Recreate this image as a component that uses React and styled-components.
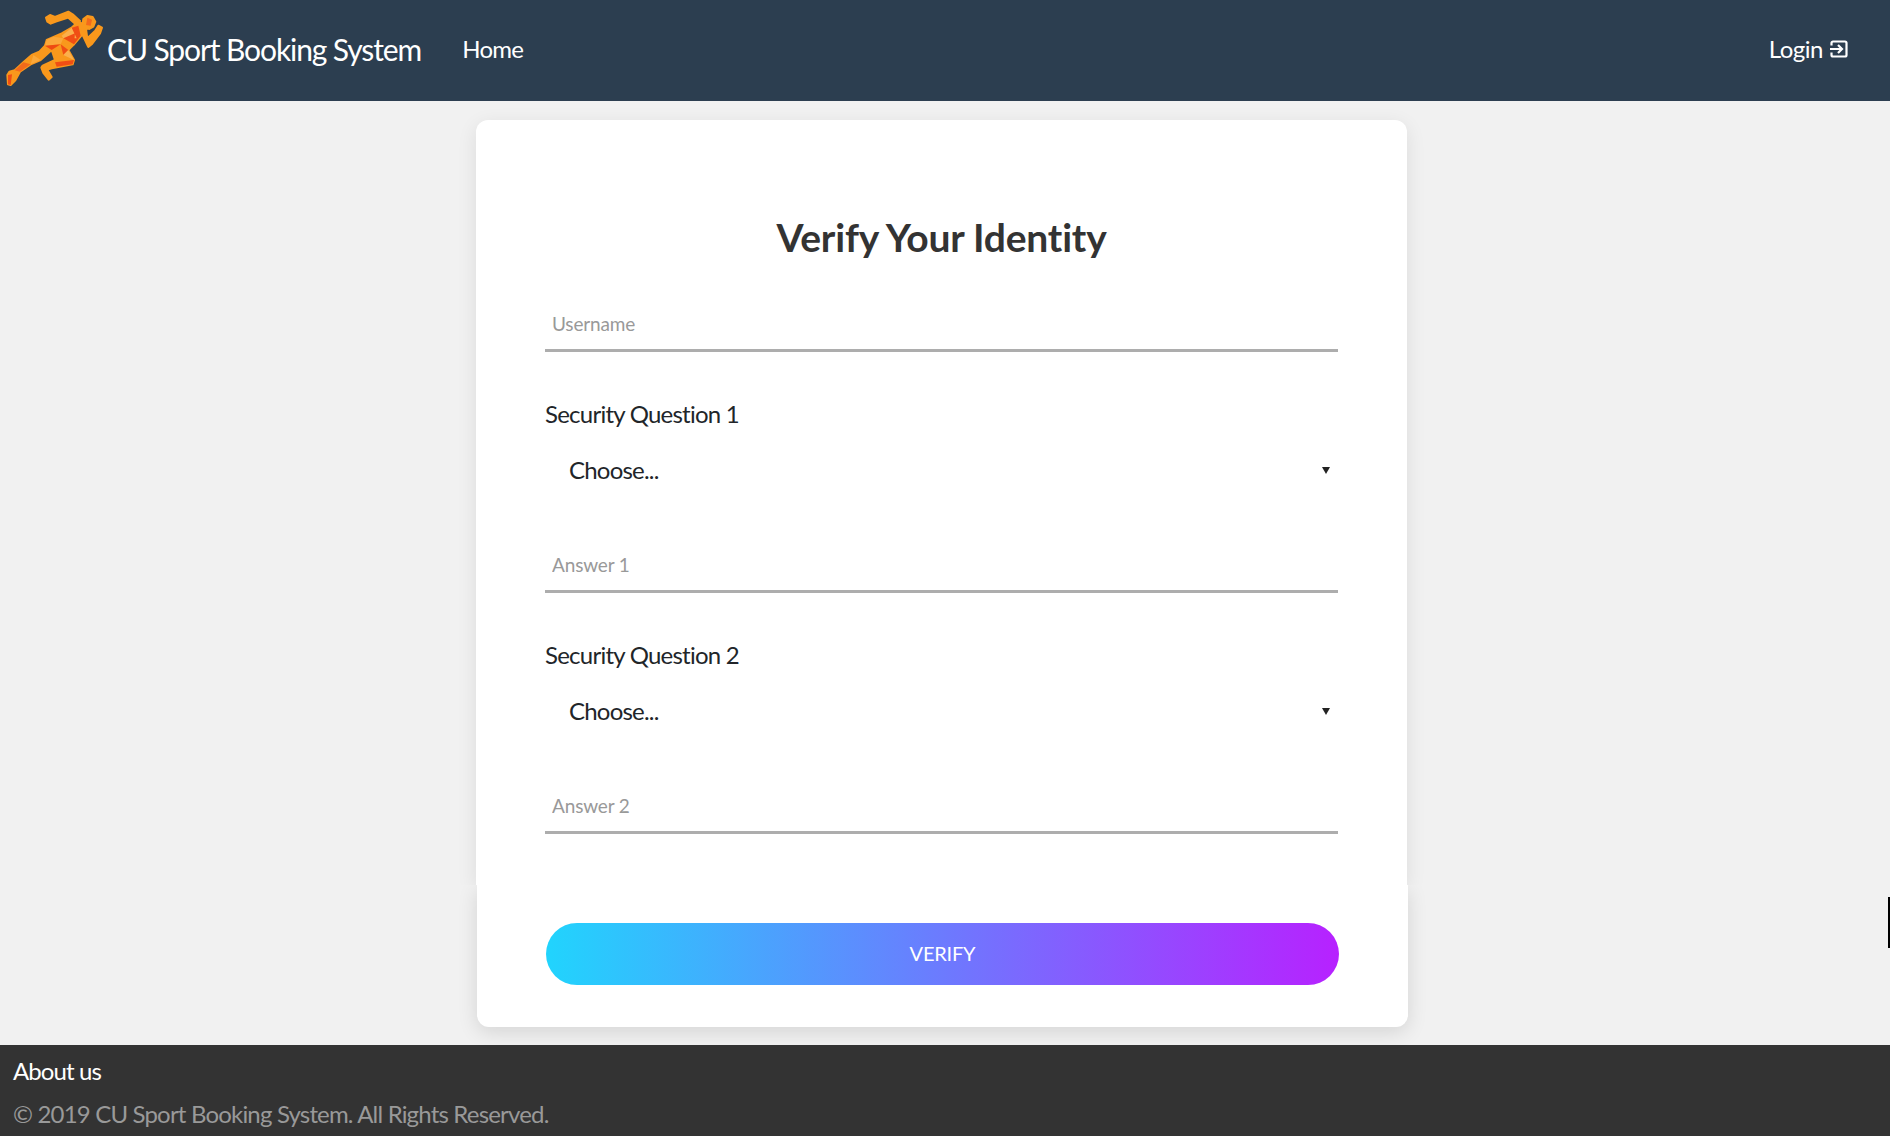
import React from 'react';
import styled, { createGlobalStyle } from 'styled-components';

const GlobalStyle = createGlobalStyle`
  html, body {
    margin: 0;
    padding: 0;
    background: #f1f1f1;
    font-family: Lato, "Open Sans", sans-serif;
    font-variant-ligatures: none;
    overflow: hidden;
  }
  * { box-sizing: border-box; }
`;

const Page = styled.div`
  position: relative;
  height: 1136px;
  display: flex;
  flex-direction: column;
`;

const Navbar = styled.nav`
  height: 101px;
  flex: none;
  background: #2c3e50;
  display: flex;
  align-items: center;
  padding: 0 42px 4px 0;
`;

const Brand = styled.a`
  display: flex;
  align-items: center;
  color: #fff;
  font-size: 30px;
  line-height: 36px;
  letter-spacing: -1.1px;
`;

const BrandText = styled.span`
  margin-left: 2px;
`;

const NavLink = styled.a`
  color: #fff;
  font-size: 24px;
  line-height: 29px;
  letter-spacing: -0.7px;
  margin-left: 41px;
`;

const LoginLink = styled(NavLink)`
  margin-left: auto;
  display: flex;
  align-items: center;
  gap: 7px;
  letter-spacing: -0.5px;
`;

const Main = styled.main`
  flex: 1;
  display: flex;
  flex-direction: column;
  align-items: center;
  padding: 19px 7px 0 0;
`;

const FormPanel = styled.form`
  width: 931px;
  height: 765px;
  background: #fff;
  border-radius: 12px 12px 0 0;
  box-shadow: 0 5px 20px rgba(0, 0, 0, 0.09);
  clip-path: inset(-30px -30px 0 -30px);
  padding: 94px 69px 0;
  display: flex;
  flex-direction: column;
`;

const ButtonPanel = styled.div`
  width: 931px;
  height: 142px;
  margin-left: 2px;
  background: #fff;
  border-radius: 0 0 12px 12px;
  box-shadow: 0 5px 20px rgba(0, 0, 0, 0.12);
  clip-path: inset(0 -30px -30px -30px);
  padding: 38px 69px 0;
`;

const Title = styled.h1`
  margin: 0 0 41px;
  font-size: 39px;
  line-height: 47px;
  font-weight: 700;
  letter-spacing: -0.22px;
  color: #333;
  text-align: center;
`;

const TextInput = styled.input`
  display: block;
  flex: none;
  width: 100%;
  height: 50px;
  border: 0;
  border-bottom: 3px solid #adadad;
  outline: 0;
  padding: 0 7px 4px;
  font-family: inherit;
  font-size: 19px;
  letter-spacing: -0.15px;
  color: #333;
  background: transparent;

  &::placeholder {
    color: #999;
    opacity: 1;
  }
`;

const QuestionLabel = styled.label`
  display: block;
  margin-top: 47px;
  font-size: 24px;
  line-height: 29px;
  letter-spacing: -0.76px;
  color: #212529;
`;

const SelectRow = styled.div`
  flex: none;
  height: 38px;
  margin: 22px 0 55px;
  padding: 0 8px 0 24px;
  display: flex;
  align-items: center;
  justify-content: space-between;
  font-size: 24px;
  letter-spacing: -0.8px;
  color: #212529;
`;

const Caret = styled.span`
  width: 0;
  height: 0;
  margin-top: 2px;
  border-left: 4px solid transparent;
  border-right: 4px solid transparent;
  border-top: 7px solid #222;
`;

const VerifyButton = styled.button`
  display: block;
  width: 793px;
  height: 62px;
  border: 0;
  border-radius: 31px;
  padding: 0 0 2px;
  background: linear-gradient(to right, #21d4fd, #b721ff);
  color: #fff;
  font-family: inherit;
  font-size: 20px;
  letter-spacing: -0.2px;
  text-transform: uppercase;
`;

const Footer = styled.footer`
  height: 91px;
  flex: none;
  background: #333;
  padding: 11px 13px 0;
`;

const FooterLink = styled.div`
  color: #fff;
  font-size: 24px;
  line-height: 29px;
  letter-spacing: -0.9px;
`;

const Copyright = styled.div`
  margin-top: 14px;
  color: #999;
  font-size: 24px;
  line-height: 29px;
  letter-spacing: -0.82px;
`;

const EdgeMark = styled.div`
  position: absolute;
  right: 0;
  top: 897px;
  width: 2px;
  height: 51px;
  background: #000;
`;

// faceted runner, colours picked from the logo
const runnerBody = [
  '138,38 150,30 165,36 205,20 218,28 240,48 232,62 205,38 168,50 152,56 142,50',
  '250,42 262,33 278,36 286,50 280,65 268,72 255,68 248,55',
  '262,100 285,78 295,62 306,68 300,85 275,118 265,126 248,90 258,72',
  '232,52 270,60 250,85 222,118 135,122 140,105 185,85 215,68',
  '135,122 222,118 205,135 222,165 218,178 155,190 142,194 155,216 146,224 130,204 124,188 128,182 165,165 155,135 122,165 92,178 60,200 46,226 32,240 24,238 22,210 28,200 44,196 70,172 95,150 118,140',
];

const runnerFacets = [
  ['#f26a1b', '262,38 276,44 272,62 258,60'],
  ['#f04e14', '215,68 235,62 242,92 222,118'],
  ['#fbb04c', '185,92 215,68 230,100 190,100'],
  ['#f04e14', '190,100 225,85 222,118'],
  ['#fba83a', '140,105 160,95 190,100 182,118 135,122'],
  ['#ee4a12', '135,122 182,118 155,135'],
  ['#f04e14', '182,118 205,135 190,150'],
  ['#fbb04c', '205,135 222,165 190,150'],
  ['#f26a1b', '70,172 92,178 60,200 44,196'],
  ['#fba83a', '100,150 122,165 92,178'],
  ['#f04e14', '24,210 36,208 32,240 24,238'],
  ['#f04e14', '165,172 222,165 218,178 170,185'],
];

function RunnerLogo() {
  return (
    <svg width="105" height="85" viewBox="0 3 315 255">
      {runnerBody.map((points) => (
        <polygon
          key={points}
          fill="#f9981c"
          stroke="#f9981c"
          strokeWidth="6"
          strokeLinejoin="round"
          points={points}
        />
      ))}
      {runnerFacets.map(([fill, points]) => (
        <polygon key={points} fill={fill} points={points} />
      ))}
    </svg>
  );
}

function LoginIcon() {
  return (
    <svg width="18" height="18" viewBox="0 0 18 18" fill="none" stroke="#fff" strokeWidth="2.2">
      <path d="M1.5 5.5V3A1.5 1.5 0 0 1 3 1.5h12A1.5 1.5 0 0 1 16.5 3v12a1.5 1.5 0 0 1-1.5 1.5H3A1.5 1.5 0 0 1 1.5 15v-2.5" />
      <path d="M0 9h11.5M8 5l4 4-4 4" />
    </svg>
  );
}

function Question({ number }) {
  return (
    <>
      <QuestionLabel>Security Question {number}</QuestionLabel>
      <SelectRow>
        Choose...
        <Caret />
      </SelectRow>
      <TextInput placeholder={`Answer ${number}`} />
    </>
  );
}

export default function App() {
  return (
    <Page>
      <GlobalStyle />
      <Navbar>
        <Brand>
          <RunnerLogo />
          <BrandText>CU Sport Booking System</BrandText>
        </Brand>
        <NavLink>Home</NavLink>
        <LoginLink>
          Login
          <LoginIcon />
        </LoginLink>
      </Navbar>
      <Main>
        <FormPanel>
          <Title>Verify Your Identity</Title>
          <TextInput placeholder="Username" />
          <Question number={1} />
          <Question number={2} />
        </FormPanel>
        <ButtonPanel>
          <VerifyButton type="button">Verify</VerifyButton>
        </ButtonPanel>
      </Main>
      <Footer>
        <FooterLink>About us</FooterLink>
        <Copyright>© 2019 CU Sport Booking System. All Rights Reserved.</Copyright>
      </Footer>
      <EdgeMark />
    </Page>
  );
}
